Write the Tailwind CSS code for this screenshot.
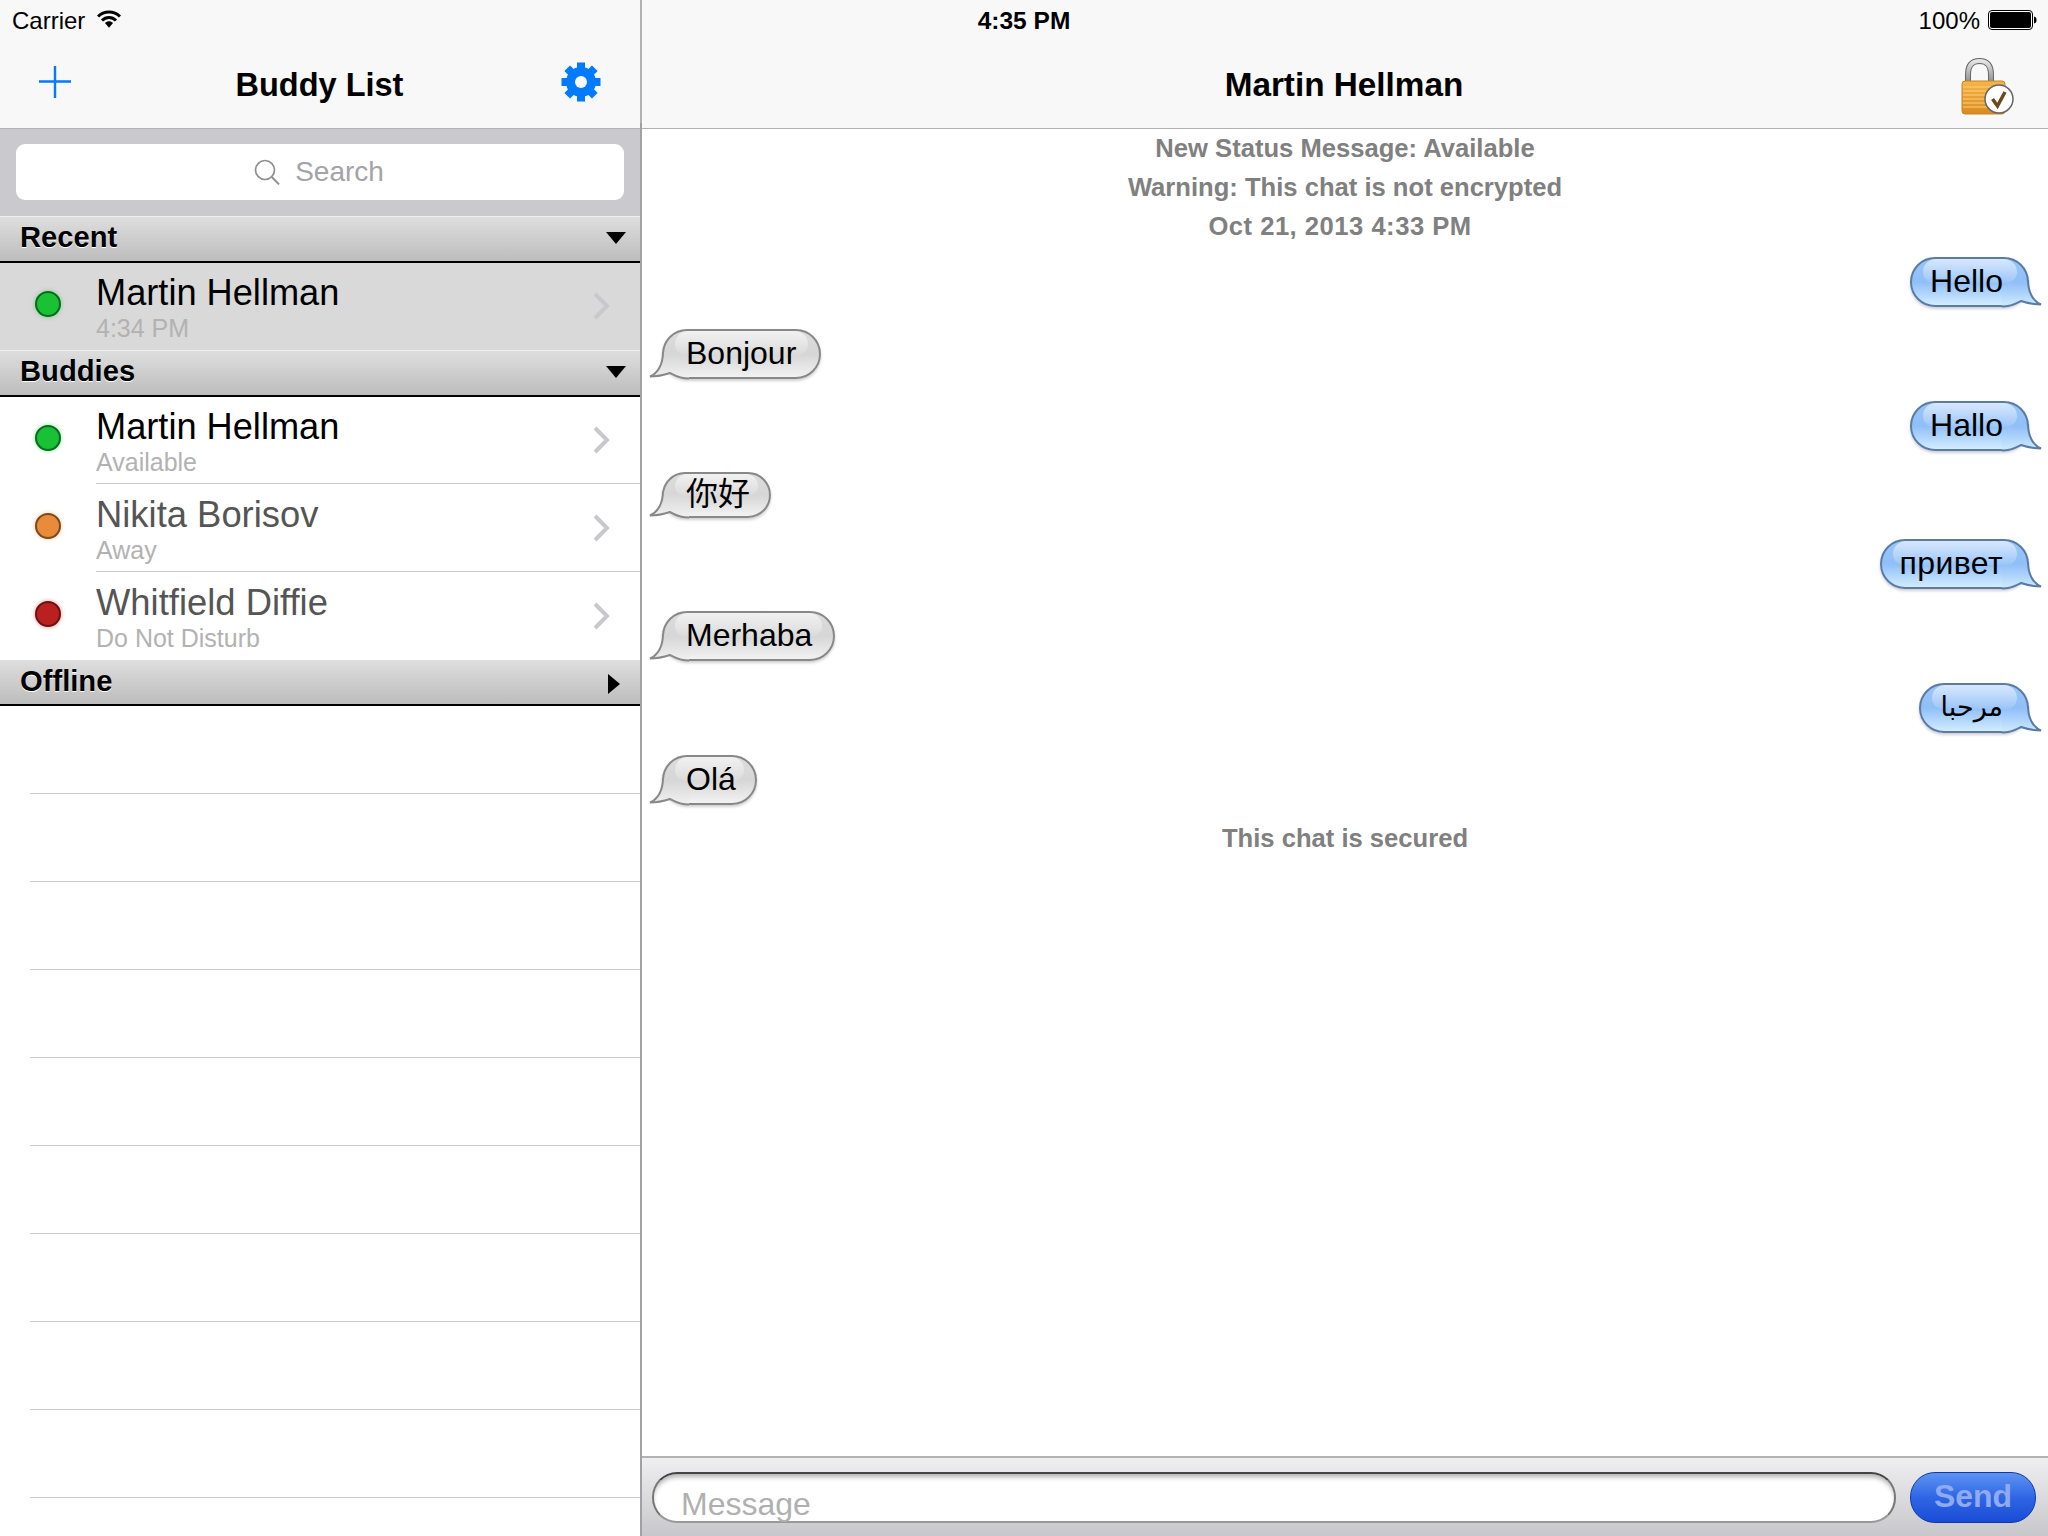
<!DOCTYPE html>
<html>
<head>
<meta charset="utf-8">
<script src="https://cdn.jsdelivr.net/npm/@tailwindcss/browser@4"></script>
</head>
<body class="m-0 bg-white">
<svg width="0" height="0" class="absolute">
  <defs>
    <linearGradient id="tailBlue" gradientUnits="userSpaceOnUse" x1="0" y1="-20" x2="0" y2="30">
      <stop offset="0" stop-color="#9bc5f8"/><stop offset="0.5" stop-color="#8fbff8"/><stop offset="1" stop-color="#d2ecff"/>
    </linearGradient>
    <linearGradient id="tailGray" gradientUnits="userSpaceOnUse" x1="0" y1="-20" x2="0" y2="30">
      <stop offset="0" stop-color="#dcdcdc"/><stop offset="0.5" stop-color="#d6d6d6"/><stop offset="1" stop-color="#f2f2f2"/>
    </linearGradient>
    <linearGradient id="lockBody" x1="0" y1="0" x2="0" y2="1">
      <stop offset="0" stop-color="#f7b548"/><stop offset="1" stop-color="#d98a1e"/>
    </linearGradient>
    <linearGradient id="shackle" x1="0" y1="0" x2="0" y2="1">
      <stop offset="0" stop-color="#e4e4e4"/><stop offset="1" stop-color="#8b8b8b"/>
    </linearGradient>
  </defs>
</svg>
<div class="w-[2048px] h-[1536px] overflow-hidden flex font-['Liberation_Sans','Noto_Sans_CJK_SC','DejaVu_Sans',sans-serif] text-black">

  <!-- Sidebar -->
  <div class="w-[640px] h-full flex flex-col shrink-0">
    <div class="h-[129px] bg-[#f8f8f8] border-b border-[#b2b2b2] flex flex-col shrink-0">
      <div class="h-[40px] flex items-center pl-[12px] pt-[2px] gap-[12px] text-[24px] leading-[40px]">
        <span>Carrier</span>
        <svg width="24" height="18" viewBox="0 0 24 18" class="-mt-[5px]">
          <path d="M1 6.500 C7 0.500 17 0.500 23 6.500" fill="none" stroke="#000" stroke-width="3"/>
          <path d="M5 10.500 C9 6.500 15 6.500 19 10.500" fill="none" stroke="#000" stroke-width="3"/>
          <path d="M8 13 C10.500 10.800 13.500 10.800 16 13 L12 17.800 Z" fill="#000"/>
        </svg>
      </div>
      <div class="flex-1 flex items-start justify-between relative pl-[39px] pr-[40px]">
        <svg width="32" height="32" viewBox="0 0 32 32" class="mt-[26px]">
          <path d="M16 0V32M0 15.500H32" stroke="#007aff" stroke-width="2.400" fill="none"/>
        </svg>
        <div class="flex-1 text-center font-bold text-[32.5px] leading-[40px] mt-[25px] pl-[7px]">Buddy List</div>
        <svg width="40" height="40" viewBox="-20 -20 40 40" class="mt-[22px] mr-[-1px]">
          <g fill="#007aff">
            <rect x="-4" y="-19.500" width="8" height="39"/>
            <rect x="-4" y="-19.500" width="8" height="39" transform="rotate(45)"/>
            <rect x="-4" y="-19.500" width="8" height="39" transform="rotate(90)"/>
            <rect x="-4" y="-19.500" width="8" height="39" transform="rotate(135)"/>
          </g>
          <circle r="10.500" fill="none" stroke="#007aff" stroke-width="9"/>
          <circle r="6" fill="#f8f8f8"/>
        </svg>
      </div>
    </div>

    <div class="h-[87px] bg-[#c9c9ce] px-[16px] pt-[15px] shrink-0">
      <div class="h-[56px] bg-white rounded-[9px] flex items-center justify-center gap-[15px] pr-[2px]">
        <svg width="26" height="26" viewBox="0 0 26 26">
          <circle cx="11" cy="11" r="9.500" fill="none" stroke="#8e8e93" stroke-width="1.700"/>
          <path d="M17.800 18 L25 25.400" stroke="#8e8e93" stroke-width="1.900" fill="none"/>
        </svg>
        <span class="text-[28px] leading-[34px] text-[#a3a3a8]">Search</span>
      </div>
    </div>

    <!-- Recent -->
    <div class="h-[47px] shrink-0 border-t border-[#eeeeee] border-b-2 border-b-black bg-linear-to-b from-[#dedede] to-[#bdbdbd] flex items-center justify-between pl-[20px] pr-[14px]">
      <span class="font-bold text-[29.2px] leading-[40px] -mt-[4px] [text-shadow:0_1px_0_#fff]">Recent</span>
      <svg width="20" height="12" viewBox="0 0 20 12" class="-mt-[3px]"><path d="M0 0H20L10 12Z" fill="#000"/></svg>
    </div>
    <div class="h-[87px] shrink-0 bg-[#d9d9d9] flex items-start">
      <div class="w-[96px] pl-[35px] pt-[28px] shrink-0">
        <div class="w-[26px] h-[26px] rounded-full bg-[#18c234] border-2 border-[#0c6a1c] shadow-[0_0_4px_#18c23480]"></div>
      </div>
      <div class="flex-1 flex flex-col pt-[12px]">
        <div class="text-[36.2px] leading-[36px] text-[#000]">Martin Hellman</div>
        <div class="text-[25px] leading-[25px] mt-[5px] text-[#b2b2b2]">4:34 PM</div>
      </div>
      <svg width="20" height="28" viewBox="0 0 20 28" class="mt-[29px] mr-[28px]"><path d="M3 2L15 14L3 26" fill="none" stroke="#c9c9cc" stroke-width="4"/></svg>
    </div>

    <!-- Buddies -->
    <div class="h-[47px] shrink-0 border-t border-[#eeeeee] border-b-2 border-b-black bg-linear-to-b from-[#dedede] to-[#bdbdbd] flex items-center justify-between pl-[20px] pr-[14px]">
      <span class="font-bold text-[29.2px] leading-[40px] -mt-[4px] [text-shadow:0_1px_0_#fff]">Buddies</span>
      <svg width="20" height="12" viewBox="0 0 20 12" class="-mt-[3px]"><path d="M0 0H20L10 12Z" fill="#000"/></svg>
    </div>
    <div class="h-[87px] shrink-0 bg-white flex items-start">
      <div class="w-[96px] pl-[35px] pt-[28px] shrink-0">
        <div class="w-[26px] h-[26px] rounded-full bg-[#18c234] border-2 border-[#0c6a1c] shadow-[0_0_4px_#18c23480]"></div>
      </div>
      <div class="flex-1 self-stretch flex items-start border-b border-[#c8c8c8]">
        <div class="flex-1 flex flex-col pt-[12px]">
          <div class="text-[36.2px] leading-[36px] text-[#000]">Martin Hellman</div>
          <div class="text-[25px] leading-[25px] mt-[5px] text-[#b2b2b2]">Available</div>
        </div>
        <svg width="20" height="28" viewBox="0 0 20 28" class="mt-[29px] mr-[28px]"><path d="M3 2L15 14L3 26" fill="none" stroke="#c7c7cc" stroke-width="4"/></svg>
      </div>
    </div>
    <div class="h-[88px] shrink-0 bg-white flex items-start">
      <div class="w-[96px] pl-[35px] pt-[29px] shrink-0">
        <div class="w-[26px] h-[26px] rounded-full bg-[#e88c3c] border-2 border-[#7a4a1c] shadow-[0_0_4px_#e88c3c80]"></div>
      </div>
      <div class="flex-1 self-stretch flex items-start border-b border-[#c8c8c8]">
        <div class="flex-1 flex flex-col pt-[13px]">
          <div class="text-[36.4px] leading-[36px] text-[#555555]">Nikita Borisov</div>
          <div class="text-[25px] leading-[25px] mt-[5px] text-[#b2b2b2]">Away</div>
        </div>
        <svg width="20" height="28" viewBox="0 0 20 28" class="mt-[30px] mr-[28px]"><path d="M3 2L15 14L3 26" fill="none" stroke="#c7c7cc" stroke-width="4"/></svg>
      </div>
    </div>
    <div class="h-[88px] shrink-0 bg-white flex items-start">
      <div class="w-[96px] pl-[35px] pt-[29px] shrink-0">
        <div class="w-[26px] h-[26px] rounded-full bg-[#bb2020] border-2 border-[#6a1212] shadow-[0_0_4px_#bb202080]"></div>
      </div>
      <div class="flex-1 self-stretch flex items-start">
        <div class="flex-1 flex flex-col pt-[13px]">
          <div class="text-[36.4px] leading-[36px] text-[#555555]">Whitfield Diffie</div>
          <div class="text-[25px] leading-[25px] mt-[5px] text-[#b2b2b2]">Do Not Disturb</div>
        </div>
        <svg width="20" height="28" viewBox="0 0 20 28" class="mt-[30px] mr-[28px]"><path d="M3 2L15 14L3 26" fill="none" stroke="#c7c7cc" stroke-width="4"/></svg>
      </div>
    </div>

    <!-- Offline -->
    <div class="h-[46px] shrink-0 border-b-2 border-b-black bg-linear-to-b from-[#dedede] to-[#bdbdbd] flex items-center justify-between pl-[20px] pr-[20px]">
      <span class="font-bold text-[29.2px] leading-[40px] -mt-[2px] [text-shadow:0_1px_0_#fff]">Offline</span>
      <svg width="12" height="20" viewBox="0 0 12 20" class="mt-[4px]"><path d="M0 0V20L12 10Z" fill="#000"/></svg>
    </div>

    <div class="flex-1 flex flex-col pl-[30px] bg-white">
      <div class="h-[88px] shrink-0 border-b border-[#c8c8c8]"></div>
      <div class="h-[88px] shrink-0 border-b border-[#c8c8c8]"></div>
      <div class="h-[88px] shrink-0 border-b border-[#c8c8c8]"></div>
      <div class="h-[88px] shrink-0 border-b border-[#c8c8c8]"></div>
      <div class="h-[88px] shrink-0 border-b border-[#c8c8c8]"></div>
      <div class="h-[88px] shrink-0 border-b border-[#c8c8c8]"></div>
      <div class="h-[88px] shrink-0 border-b border-[#c8c8c8]"></div>
      <div class="h-[88px] shrink-0 border-b border-[#c8c8c8]"></div>
      <div class="h-[88px] shrink-0 border-b border-[#c8c8c8]"></div>
    </div>
  </div>

  <div class="w-[2px] h-full shrink-0 bg-linear-to-b from-[#b2b2b2] from-[8%] to-[#a0a0a5] to-[8%]"></div>

  <!-- Chat -->
  <div class="flex-1 h-full flex flex-col min-w-0">
    <div class="h-[129px] bg-[#f8f8f8] border-b border-[#b2b2b2] flex flex-col shrink-0">
      <div class="h-[40px] flex items-center pt-[2px] text-[24px] leading-[40px]">
        <div class="w-[764px] text-center font-bold text-[24.5px]">4:35 PM</div>
        <div class="flex-1 flex items-center justify-end pr-[11px] gap-[8px]">
          <span>100%</span>
          <svg width="49" height="20" viewBox="0 0 49 20" class="-mt-[2px]">
            <rect x="0.500" y="0.500" width="44" height="19" rx="3.500" fill="#fff" stroke="#000"/>
            <rect x="2" y="2" width="41" height="16" rx="2" fill="#000"/>
            <path d="M46 6.500C48 7 48.500 8 48.500 10C48.500 12 48 13 46 13.500Z" fill="#000"/>
          </svg>
        </div>
      </div>
      <div class="flex-1 flex items-start">
        <div class="w-[1312px] pl-[92px] text-center font-bold text-[33.3px] leading-[40px] mt-[25px]">Martin Hellman</div>
        <svg width="58" height="60" viewBox="0 0 58 60" class="mt-[17px] ml-[4px]">
          <path d="M10 26V18C10 8 14 4 21.500 4C29 4 33 8 33 18V26" fill="none" stroke="#666" stroke-width="6"/>
          <path d="M10 26V18C10 8 14 4 21.500 4C29 4 33 8 33 18V26" fill="none" stroke="url(#shackle)" stroke-width="4"/>
          <rect x="4" y="24" width="43" height="33" rx="3" fill="url(#lockBody)" stroke="#c98322"/>
          <path d="M5 30H46M5 34H46M5 38H46M5 42H46M5 46H46M5 50H46" stroke="#fbd27f" stroke-width="1.200"/>
          <circle cx="41" cy="42" r="14" fill="#fff" stroke="#666" stroke-width="1.500"/>
          <path d="M34.500 42L39.500 49L47 35" fill="none" stroke="#6b4a1e" stroke-width="3.500"/>
        </svg>
      </div>
    </div>

    <div class="flex-1 bg-white flex flex-col min-h-0">
      <div class="text-center font-bold text-[25.6px] leading-[39px] text-[#808080]">
        <div>New Status Message: Available</div>
        <div>Warning: This chat is not encrypted</div>
        <div class="pr-[10px] tracking-[0.5px]">Oct 21, 2013 4:33 PM</div>
      </div>

      <!-- Hello -->
      <div class="flex justify-end pr-[19px] mt-[11px]">
        <div class="relative h-[50px] rounded-[25px] border-2 border-[#5a7aa8] bg-linear-to-b from-[#9bc5f8] via-[#8fbff8] to-[#d2ecff] shadow-[0_2px_3px_#00000030] pl-[18px] pr-[24px] text-[32px] leading-[44px]">
          <div class="absolute left-[11px] right-[10px] top-0 h-[24px] rounded-b-[12px] rounded-t-[14px] bg-linear-to-b from-white/60 to-white/10"></div>
          <svg width="44" height="30" viewBox="0 0 44 30" class="absolute right-[-16px] bottom-[-2px] overflow-visible"><path d="M29 3C29 15 34 24 42 27.500C36 27.500 28 26 22 24C18 26 12 29.500 3 29.500L3 10Z" fill="url(#tailBlue)"/><path d="M29 3C29 15 34 24 42 27.500C36 27.500 28 26 22 24C18 26 12 29.500 3 29.500" fill="none" stroke="#5a7aa8" stroke-width="2"/></svg>
          <span class="relative">Hello</span>
        </div>
      </div>
      <!-- Bonjour -->
      <div class="flex justify-start pl-[20px] mt-[22px]">
        <div class="relative h-[50px] rounded-[25px] border-2 border-[#888888] bg-linear-to-b from-[#dcdcdc] via-[#d6d6d6] to-[#f2f2f2] shadow-[0_2px_3px_#00000030] pl-[22px] pr-[23px] text-[32px] leading-[44px]">
          <div class="absolute left-[11px] right-[11px] top-0 h-[24px] rounded-b-[12px] rounded-t-[14px] bg-linear-to-b from-white/60 to-white/10"></div>
          <svg width="44" height="30" viewBox="0 0 44 30" class="absolute left-[-16px] bottom-[-2px] overflow-visible -scale-x-100"><path d="M29 3C29 15 34 24 42 27.500C36 27.500 28 26 22 24C18 26 12 29.500 3 29.500L3 10Z" fill="url(#tailGray)"/><path d="M29 3C29 15 34 24 42 27.500C36 27.500 28 26 22 24C18 26 12 29.500 3 29.500" fill="none" stroke="#888888" stroke-width="2"/></svg>
          <span class="relative">Bonjour</span>
        </div>
      </div>
      <!-- Hallo -->
      <div class="flex justify-end pr-[19px] mt-[22px]">
        <div class="relative h-[50px] rounded-[25px] border-2 border-[#5a7aa8] bg-linear-to-b from-[#9bc5f8] via-[#8fbff8] to-[#d2ecff] shadow-[0_2px_3px_#00000030] pl-[18px] pr-[24px] text-[32px] leading-[44px]">
          <div class="absolute left-[11px] right-[10px] top-0 h-[24px] rounded-b-[12px] rounded-t-[14px] bg-linear-to-b from-white/60 to-white/10"></div>
          <svg width="44" height="30" viewBox="0 0 44 30" class="absolute right-[-16px] bottom-[-2px] overflow-visible"><path d="M29 3C29 15 34 24 42 27.500C36 27.500 28 26 22 24C18 26 12 29.500 3 29.500L3 10Z" fill="url(#tailBlue)"/><path d="M29 3C29 15 34 24 42 27.500C36 27.500 28 26 22 24C18 26 12 29.500 3 29.500" fill="none" stroke="#5a7aa8" stroke-width="2"/></svg>
          <span class="relative">Hallo</span>
        </div>
      </div>
      <!-- 你好 -->
      <div class="flex justify-start pl-[20px] mt-[21px]">
        <div class="relative h-[46px] rounded-[23px] border-2 border-[#888888] bg-linear-to-b from-[#dcdcdc] via-[#d6d6d6] to-[#f2f2f2] shadow-[0_2px_3px_#00000030] pl-[22px] pr-[19px] text-[32px] leading-[40px]">
          <div class="absolute left-[11px] right-[11px] top-0 h-[22px] rounded-b-[11px] rounded-t-[14px] bg-linear-to-b from-white/60 to-white/10"></div>
          <svg width="44" height="30" viewBox="0 0 44 30" class="absolute left-[-16px] bottom-[-2px] overflow-visible -scale-x-100"><path d="M29 3C29 15 34 24 42 27.500C36 27.500 28 26 22 24C18 26 12 29.500 3 29.500L3 10Z" fill="url(#tailGray)"/><path d="M29 3C29 15 34 24 42 27.500C36 27.500 28 26 22 24C18 26 12 29.500 3 29.500" fill="none" stroke="#888888" stroke-width="2"/></svg>
          <span class="relative">你好</span>
        </div>
      </div>
      <!-- привет -->
      <div class="flex justify-end pr-[19px] mt-[21px]">
        <div class="relative h-[50px] rounded-[25px] border-2 border-[#5a7aa8] bg-linear-to-b from-[#9bc5f8] via-[#8fbff8] to-[#d2ecff] shadow-[0_2px_3px_#00000030] pl-[18px] pr-[24px] text-[32px] leading-[44px] tracking-[0.4px]">
          <div class="absolute left-[11px] right-[10px] top-0 h-[24px] rounded-b-[12px] rounded-t-[14px] bg-linear-to-b from-white/60 to-white/10"></div>
          <svg width="44" height="30" viewBox="0 0 44 30" class="absolute right-[-16px] bottom-[-2px] overflow-visible"><path d="M29 3C29 15 34 24 42 27.500C36 27.500 28 26 22 24C18 26 12 29.500 3 29.500L3 10Z" fill="url(#tailBlue)"/><path d="M29 3C29 15 34 24 42 27.500C36 27.500 28 26 22 24C18 26 12 29.500 3 29.500" fill="none" stroke="#5a7aa8" stroke-width="2"/></svg>
          <span class="relative">привет</span>
        </div>
      </div>
      <!-- Merhaba -->
      <div class="flex justify-start pl-[20px] mt-[22px]">
        <div class="relative h-[50px] rounded-[25px] border-2 border-[#888888] bg-linear-to-b from-[#dcdcdc] via-[#d6d6d6] to-[#f2f2f2] shadow-[0_2px_3px_#00000030] pl-[22px] pr-[21px] text-[32px] leading-[44px]">
          <div class="absolute left-[11px] right-[11px] top-0 h-[24px] rounded-b-[12px] rounded-t-[14px] bg-linear-to-b from-white/60 to-white/10"></div>
          <svg width="44" height="30" viewBox="0 0 44 30" class="absolute left-[-16px] bottom-[-2px] overflow-visible -scale-x-100"><path d="M29 3C29 15 34 24 42 27.500C36 27.500 28 26 22 24C18 26 12 29.500 3 29.500L3 10Z" fill="url(#tailGray)"/><path d="M29 3C29 15 34 24 42 27.500C36 27.500 28 26 22 24C18 26 12 29.500 3 29.500" fill="none" stroke="#888888" stroke-width="2"/></svg>
          <span class="relative">Merhaba</span>
        </div>
      </div>
      <!-- Arabic -->
      <div class="flex justify-end pr-[19px] mt-[22px]">
        <div class="relative h-[50px] rounded-[25px] border-2 border-[#5a7aa8] bg-linear-to-b from-[#9bc5f8] via-[#8fbff8] to-[#d2ecff] shadow-[0_2px_3px_#00000030] pl-[20px] pr-[24px] text-[27px] leading-[44px]">
          <div class="absolute left-[11px] right-[10px] top-0 h-[24px] rounded-b-[12px] rounded-t-[14px] bg-linear-to-b from-white/60 to-white/10"></div>
          <svg width="44" height="30" viewBox="0 0 44 30" class="absolute right-[-16px] bottom-[-2px] overflow-visible"><path d="M29 3C29 15 34 24 42 27.500C36 27.500 28 26 22 24C18 26 12 29.500 3 29.500L3 10Z" fill="url(#tailBlue)"/><path d="M29 3C29 15 34 24 42 27.500C36 27.500 28 26 22 24C18 26 12 29.500 3 29.500" fill="none" stroke="#5a7aa8" stroke-width="2"/></svg>
          <span class="relative">مرحبا</span>
        </div>
      </div>
      <!-- Olá -->
      <div class="flex justify-start pl-[20px] mt-[22px]">
        <div class="relative h-[50px] rounded-[25px] border-2 border-[#888888] bg-linear-to-b from-[#dcdcdc] via-[#d6d6d6] to-[#f2f2f2] shadow-[0_2px_3px_#00000030] pl-[22px] pr-[19px] text-[32px] leading-[44px]">
          <div class="absolute left-[11px] right-[11px] top-0 h-[24px] rounded-b-[12px] rounded-t-[14px] bg-linear-to-b from-white/60 to-white/10"></div>
          <svg width="44" height="30" viewBox="0 0 44 30" class="absolute left-[-16px] bottom-[-2px] overflow-visible -scale-x-100"><path d="M29 3C29 15 34 24 42 27.500C36 27.500 28 26 22 24C18 26 12 29.500 3 29.500L3 10Z" fill="url(#tailGray)"/><path d="M29 3C29 15 34 24 42 27.500C36 27.500 28 26 22 24C18 26 12 29.500 3 29.500" fill="none" stroke="#888888" stroke-width="2"/></svg>
          <span class="relative">Olá</span>
        </div>
      </div>

      <div class="text-center font-bold text-[25.6px] leading-[38px] text-[#808080] mt-[14px]">This chat is secured</div>
    </div>

    <div class="h-[80px] shrink-0 border-t-2 border-[#b2b2b2] bg-linear-to-b from-[#efeff0] to-[#c8c8cc] flex items-start pl-[10px] pr-[12px] pt-[14px] gap-[14px]">
      <div class="flex-1 h-[51px] rounded-[25px] bg-white border-2 border-[#777] border-t-[#444] border-b-[#999] shadow-[inset_0_5px_5px_-2px_#00000050] pl-[27px] text-[32px] leading-[60px] text-[#b0b0b0]">Message</div>
      <div class="w-[126px] h-[51px] rounded-[25px] border border-[#0c3aa8] bg-linear-to-b from-[#5e93f2] via-[#2f66e4] via-50% to-[#1a4bd6] text-center font-bold text-[32px] leading-[46px] text-[#8eaaf0]">Send</div>
    </div>
  </div>
</div>
</body>
</html>
